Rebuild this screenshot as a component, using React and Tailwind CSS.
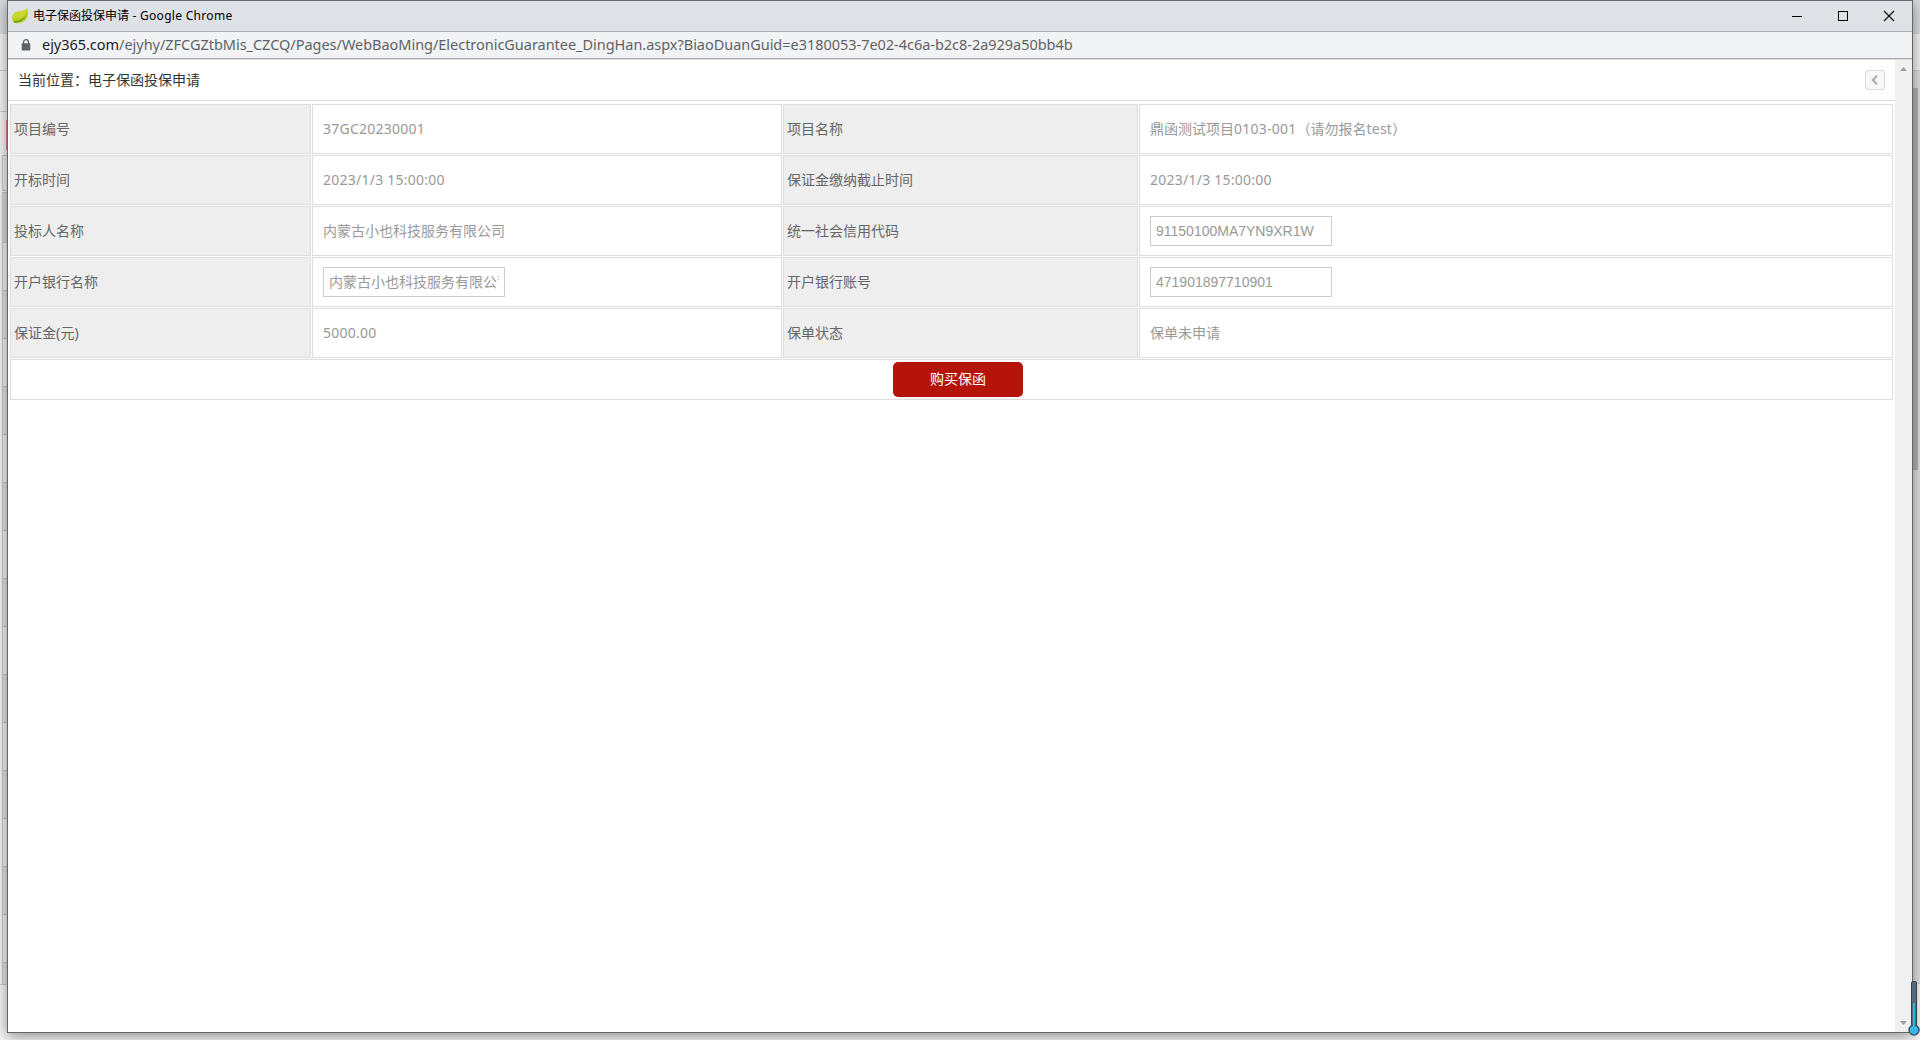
import React, { useState } from "react";

// ==================== TABLE DATA ====================
const rows = [
  [
    { label: "项目编号", value: "37GC20230001" },
    { label: "项目名称", value: "鼎函测试项目0103-001（请勿报名test）" },
  ],
  [
    { label: "开标时间", value: "2023/1/3 15:00:00" },
    { label: "保证金缴纳截止时间", value: "2023/1/3 15:00:00" },
  ],
  [
    { label: "投标人名称", value: "内蒙古小也科技服务有限公司" },
    { label: "统一社会信用代码", value: "91150100MA7YN9XR1W", input: true },
  ],
  [
    { label: "开户银行名称", value: "内蒙古小也科技服务有限公司", input: true },
    { label: "开户银行账号", value: "471901897710901", input: true },
  ],
  [
    { label: "保证金(元)", value: "5000.00" },
    { label: "保单状态", value: "保单未申请" },
  ],
];

// ==================== ICONS ====================
function LeafIcon() {
  return (
    <svg width="16" height="16" viewBox="0 0 16 16">
      <path d="M15 0.500C13 3 9.500 3.200 5.500 3.800C1.500 4.500 0 7.500 0.300 11C0.500 13 1.200 14.300 2.500 15C9 15.800 14 13.500 15.500 8.500C16.200 5.500 15.800 2.500 15 0.500Z" fill="#b9cc16" />
      <path d="M15 0.500C13 3 9.500 3.200 5.500 3.800C2 4.500 0.300 7 0.300 10.500C5 10.800 11 10.500 13.500 6C14.500 4 15.200 2 15 0.500Z" fill="#c9d62c" />
      <path d="M1.500 13.200C6.500 13.300 11 11.500 13.800 7.500C12 12.300 7.500 14.600 2.600 14.400Z" fill="#63992a" />
    </svg>
  );
}

function LockIcon() {
  return (
    <svg width="10" height="12" viewBox="0 0 10 12">
      <path d="M2.500 5V3.200a2.500 2.500 0 0 1 5 0V5" fill="none" stroke="#5f6368" strokeWidth="1.300" />
      <rect x="0.700" y="4.300" width="8.600" height="7.200" rx="0.800" fill="#5f6368" />
    </svg>
  );
}

function Thermometer() {
  return (
    <svg className="absolute left-[1907px] top-[980px] z-20" width="13" height="56" viewBox="0 0 13 56">
      <rect x="4.500" y="1.500" width="5" height="48" rx="1.500" fill="#566b78" stroke="#33444f" />
      <circle cx="7" cy="50" r="5" fill="#35b6e6" stroke="#3f5563" strokeWidth="1.500" />
      <rect x="6" y="23" width="2" height="25" fill="#2fb4ea" />
    </svg>
  );
}

// ==================== PAGE BEHIND THE POPUP ====================
function LeftEdge() {
  return (
    <div className="flex h-[1040px] w-[7px] shrink-0 flex-col bg-[#f7f7f7]">
      <div className="h-[34px] bg-[#dcdde1]" />
      <div className="h-[37px] border-b border-[#d0d0d0]" />
      <div className="h-[41px] border-b border-[#d0d0d0]" />
      <div className="h-[8px]" />
      <div className="ml-auto h-[30px] w-px bg-[#f08a8a]" />
      <div className="mt-[5px] ml-[2px] h-[36px] border-y border-l border-[#cccccc] bg-[#f0f0f0]" />
      <div className="ml-[2px] mt-px border-l border-t border-[#cccccc]">
        <div className="h-[50px] border-b border-[#cccccc] bg-[#dcdcdc]" />
        {Array.from({ length: 15 }, (_, i) => (
          <div
            key={i}
            className={`h-[48px] border-b border-[#cccccc] ${i % 2 ? "bg-[#e6e6e6]" : "bg-[#f4f4f4]"}`}
          />
        ))}
        <div className="h-[21px] bg-[#e6e6e6]" />
      </div>
      <div className="h-px bg-[#cccccc]" />
    </div>
  );
}

function RightEdge() {
  return (
    <div className="flex h-[1040px] w-[7px] shrink-0 flex-col bg-[#e2e2e2]">
      <div className="h-[34px] bg-[#dcdde1]" />
      <div className="h-[37px] border-b border-[#d0d0d0] bg-[#f4f4f4]" />
      <div className="h-[17px]" />
      <div className="h-[382px] w-[5px] bg-[#b4b4b4]" />
      <div className="mt-[503px] h-[11px] border-b border-[#cccccc]" />
      <div className="grow bg-[#f7f7f7]" />
    </div>
  );
}

// ==================== BROWSER CHROME ====================
function TitleBar() {
  return (
    <div className="flex h-[31px] items-center border-b border-[#a9adb1] bg-[#dee1e6] pl-[4px] text-black">
      <LeafIcon />
      <span className="ml-[5px] whitespace-pre text-[12px]">
        电子保函投保申请<span className="tracking-[0.3px]"> - Google Chrome</span>
      </span>
      <svg className="ml-auto mr-[16px]" width="104" height="12" viewBox="0 0 104 12" fill="none" stroke="#000">
        <path d="M0 6.500H10" />
        <rect x="46.500" y="1.500" width="9" height="9" />
        <path d="M92 1L102 11M102 1L92 11" strokeWidth="1.100" />
      </svg>
    </div>
  );
}

function AddressBar() {
  return (
    <div className="flex h-[28px] items-center border-b border-[#dadada] bg-[#f1f3f4] shadow-[inset_0_-1px_0_#a9adb1]">
      <span className="ml-[13px] mb-px">
        <LockIcon />
      </span>
      <span className="ml-[11px] mb-px whitespace-nowrap text-[14.5px] tracking-[-0.03px] text-[#5f6368]">
        <span className="text-[#202124]">ejy365.com</span>
        /ejyhy/ZFCGZtbMis_CZCQ/Pages/WebBaoMing/ElectronicGuarantee_DingHan.aspx?BiaoDuanGuid=e3180053-7e02-4c6a-b2c8-2a929a50bb4b
      </span>
    </div>
  );
}

function Scrollbar() {
  return (
    <div className="flex w-[17px] shrink-0 flex-col items-center justify-between bg-[#f0f0f0] py-[7px]">
      <svg width="7" height="4" viewBox="0 0 7 4">
        <path d="M0 4L3.500 0L7 4Z" fill="#a0a0a0" />
      </svg>
      <svg width="7" height="4" viewBox="0 0 7 4">
        <path d="M0 0L3.500 4L7 0Z" fill="#a0a0a0" />
      </svg>
    </div>
  );
}

// ==================== FORM CELLS ====================
// Latin runs are spaced a little wider than the Chinese text around them
function MixedText({ text }) {
  return (
    <span className="mb-[2px] whitespace-pre">
      {text.split(/([\x20-\x7e]+)/).map((part, i) =>
        i % 2 ? (
          <span key={i} className="tracking-[0.24px]">{part}</span>
        ) : (
          part
        )
      )}
    </span>
  );
}

function Cell({ label, value, input }) {
  const [text, setText] = useState(value);
  const isLatin = /^[\x20-\x7e]*$/.test(text);
  return (
    <>
      <div className="flex items-center border border-[#dddddd] bg-[#eeeeee] pl-[3px] text-[#666666]">
        <MixedText text={label} />
      </div>
      <div className="flex items-center border border-[#dddddd] pl-[10px] text-[#999999]">
        {input ? (
          <input
            className={`h-[30px] w-[182px] border border-[#cccccc] px-[5px] font-['Liberation_Sans','Noto_Sans_CJK_SC',sans-serif] text-[14px] outline-none ${isLatin ? "" : "pb-[2px]"}`}
            value={text}
            onChange={(e) => setText(e.target.value)}
          />
        ) : (
          <MixedText text={value} />
        )}
      </div>
    </>
  );
}

function App() {
  return (
    <div className="relative flex h-[1040px] w-[1920px] overflow-hidden bg-[#f7f7f7] font-['Noto_Sans','Noto_Sans_CJK_SC',sans-serif] text-[14px]">
      <LeftEdge />

      {/* POPUP WINDOW */}
      <div className="relative z-10 flex h-[1033px] w-[1906px] shrink-0 flex-col border border-[#666666] bg-white shadow-[0_3px_14px_rgba(0,0,0,0.45)]">
        <TitleBar />
        <AddressBar />

        <div className="flex grow">
          <div className="w-[1887px]">
            {/* BREADCRUMB */}
            <div className="flex h-[41px] items-center justify-between border-b border-[#dddddd] pl-[10px] pr-[10px] text-[#333333]">
              <span className="mb-[2px]">当前位置：电子保函投保申请</span>
              <button className="flex h-[20px] w-[20px] items-center justify-center rounded-[3px] border border-[#dcdcdf] bg-[#f8f8fa] pr-px">
                <svg width="7" height="10" viewBox="0 0 7 10">
                  <path d="M6 0.800L1.800 5L6 9.200" fill="none" stroke="#a9a9a9" strokeWidth="2" />
                </svg>
              </button>
            </div>

            {/* GUARANTEE TABLE */}
            <div className="ml-[2px] mt-[3px] grid w-[1883px] auto-rows-[50px] grid-cols-[301px_470px_355px_754px] gap-px">
              {rows.flat().map((cell) => (
                <Cell key={cell.label} {...cell} />
              ))}
              <div className="col-span-4 flex h-[41px] items-center justify-center border border-[#dddddd] pl-[13px]">
                <button className="h-[35px] w-[130px] rounded-[5px] bg-[#b41409] pb-[2px] text-white">
                  购买保函
                </button>
              </div>
            </div>
          </div>
          <Scrollbar />
        </div>
      </div>

      <RightEdge />
      <Thermometer />
    </div>
  );
}

export default App;
